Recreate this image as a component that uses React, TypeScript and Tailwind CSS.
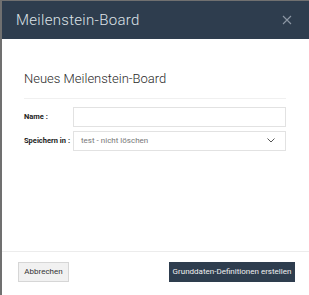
import React from "react";

export default function App() {
  return (
    <div
      className="w-[309px] h-[295px] bg-[#707070] overflow-hidden pl-[2px] pt-[1px]"
      style={{ fontFamily: "Roboto, 'Liberation Sans', sans-serif" }}
    >
      <div className="w-[310px] h-[300px] bg-white flex flex-col">
        <div className="h-[38px] bg-[#2e3d4e] flex items-center justify-between pl-[14px] pr-[14px]">
          <span className="text-[15px] text-[#dde2e7] font-light tracking-[0.3px]">Meilenstein-Board</span>
          <svg width="10" height="10" viewBox="0 0 10 10" className="mr-[6px]">
            <path d="M1 1L9 9M9 1L1 9" stroke="#8d98a5" strokeWidth="1.1" />
          </svg>
        </div>
        <div className="flex-1 flex flex-col px-[22px]">
          <div className="pt-[30px] pb-[9px] text-[13px] font-light text-[#2a2a2a] border-b border-[#f0f0f0] w-[262px]">
            Neues Meilenstein-Board
          </div>
          <div className="mt-[8px] flex items-center gap-0">
            <span className="w-[49px] text-[7.5px] font-bold text-[#222]">Name :</span>
            <div className="w-[213px] h-[20px] border border-[#e2e2e2] bg-white" />
          </div>
          <div className="mt-[4px] flex items-center">
            <span className="w-[49px] text-[7.5px] font-bold text-[#222] whitespace-nowrap">Speichern in :</span>
            <div className="w-[213px] h-[20px] border border-[#e2e2e2] bg-white flex items-center justify-between pl-[7px] pr-[10px]">
              <span className="text-[8px] text-[#777]">test - nicht löschen</span>
              <svg width="8" height="5" viewBox="0 0 8 5">
                <path d="M0.5 0.5L4 4L7.5 0.5" stroke="#555" strokeWidth="1" fill="none" />
              </svg>
            </div>
          </div>
        </div>
        <div className="h-[45px] mb-[5px] border-t border-[#ececec] flex items-start pt-[10px] pl-[16px] pr-[14px] justify-between w-[307px]">
          <button className="w-[51px] h-[20px] bg-[#f1f1f1] border border-[#d6d6d6] text-[8px] text-[#333]">
            Abbrechen
          </button>
          <button className="w-[126px] h-[20px] bg-[#2e3d4e] text-[8px] text-[#f0f0f0]">
            Grunddaten-Definitionen erstellen
          </button>
        </div>
      </div>
    </div>
  );
}
